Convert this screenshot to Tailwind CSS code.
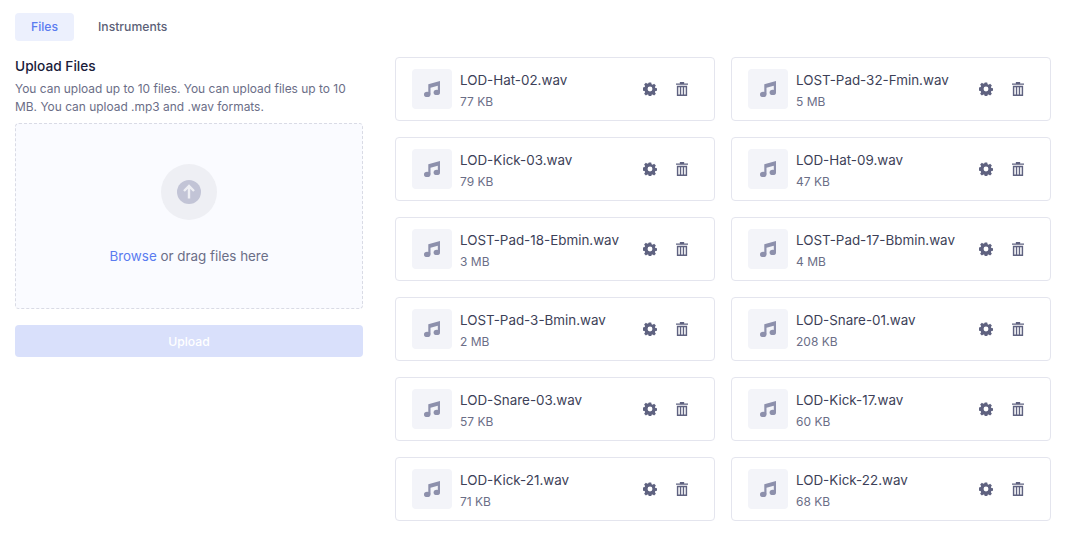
<!DOCTYPE html>
<html lang="en">
<head>
  <meta charset="UTF-8" />
  <meta name="viewport" content="width=device-width, initial-scale=1.0" />
  <title>Upload Files</title>
  <script src="https://cdn.jsdelivr.net/npm/@tailwindcss/browser@4"></script>
</head>
<body class="bg-white h-[539px] overflow-hidden font-['Inter',sans-serif]">

  <!-- Tabs -->
  <div class="flex gap-2 px-[15px] pt-[13px] h-[57px] text-[12.2px] font-medium">
    <button class="h-7 w-[59px] pt-[1px] rounded bg-[#ecf0fd] text-[#5a7cf0]">Files</button>
    <button class="h-7 px-4 pt-[1px] text-[#5c5f77]">Instruments</button>
  </div>

  <div class="flex gap-8 pl-[15px]">
    <!-- Upload -->
    <div class="w-[348px]">
      <h2 class="text-[13.7px] leading-[18px] font-medium text-[#1a1c3a]">Upload Files</h2>
      <p class="mt-[5px] text-[11.95px] leading-[18px] text-[#6b6e87]">You can upload up to 10 files. You can upload files up to 10 MB. You can upload .mp3 and .wav formats.</p>
      <div class="mt-[7px] h-[186px] flex flex-col items-center rounded border border-dashed border-[#d9dbe5] bg-[#fafbff]">
        <div class="mt-10 w-14 h-14 rounded-full bg-[#eeeff4] flex items-center justify-center">
          <svg class="w-6 h-6" viewBox="0 0 24 24">
            <circle cx="12" cy="12" r="12" fill="#c2c4d6" />
            <path d="M12 18.500V6.500M7 11l5-5 5 5" fill="none" stroke="#eeeff4" stroke-width="2.400" />
          </svg>
        </div>
        <p class="mt-[26px] text-[13.4px] leading-5 text-[#6b6e87]"><span class="text-[#5a7cf0]">Browse</span> or drag files here</p>
      </div>
      <button class="mt-4 w-full h-8 pt-[2px] rounded bg-[#d9e0fb] text-[12.2px] font-medium text-white">Upload</button>
    </div>

    <!-- File list -->
    <div id="files" class="grid grid-cols-[320px_320px] gap-4"></div>
  </div>

  <script>
    const files = [
      ['LOD-Hat-02.wav', '77 KB'], ['LOST-Pad-32-Fmin.wav', '5 MB'],
      ['LOD-Kick-03.wav', '79 KB'], ['LOD-Hat-09.wav', '47 KB'],
      ['LOST-Pad-18-Ebmin.wav', '3 MB'], ['LOST-Pad-17-Bbmin.wav', '4 MB'],
      ['LOST-Pad-3-Bmin.wav', '2 MB'], ['LOD-Snare-01.wav', '208 KB'],
      ['LOD-Snare-03.wav', '57 KB'], ['LOD-Kick-17.wav', '60 KB'],
      ['LOD-Kick-21.wav', '71 KB'], ['LOD-Kick-22.wav', '68 KB'],
    ];

    document.getElementById('files').innerHTML = files.map(([name, size]) => `
      <div class="h-16 flex items-center pl-4 rounded border border-[#e4e5ee] bg-white">
        <div class="w-10 h-10 shrink-0 rounded bg-[#f3f4f9] flex items-center justify-center">
          <svg class="w-4 h-4" viewBox="0 0 16 16" fill="#8d90ac">
            <path d="M4.300 3.300 16 0v11.500h-2.200V4.700L6.500 6.800v6.700H4.300z" />
            <ellipse cx="3.200" cy="13.400" rx="3.200" ry="2.600" />
            <ellipse cx="12.800" cy="11.400" rx="3.200" ry="2.600" />
          </svg>
        </div>
        <div class="ml-2 w-[174px] pt-[3px]">
          <div class="text-[13.4px] leading-5 text-[#3d3f58] whitespace-nowrap">${name}</div>
          <div class="mt-[2px] text-xs leading-5 text-[#6b6e87]">${size}</div>
        </div>
        <button class="ml-2 w-4 h-4 flex items-center justify-center">
          <svg class="w-[14px] h-[14px]" viewBox="0 0 16 16" fill="#5f6280">
            <path fill-rule="evenodd" d="M6.600.5h2.800l.4 2 1.200.5 1.700-1.100 2 2-1.100 1.700.5 1.200 2 .4v2.800l-2 .4-.5 1.200 1.100 1.700-2 2-1.700-1.100-1.200.5-.4 2H6.600l-.4-2-1.200-.5-1.700 1.100-2-2 1.100-1.700-.5-1.200-2-.4V6.200l2-.4.5-1.200-1.100-1.700 2-2 1.700 1.100 1.200-.5zM8 5.200a2.800 2.800 0 1 0 0 5.600 2.800 2.800 0 0 0 0-5.600z" />
          </svg>
        </button>
        <button class="ml-4 w-4 h-4 flex items-center justify-center">
          <svg class="w-3 h-[14px]" viewBox="0 0 14 15" preserveAspectRatio="none" fill="#5f6280">
            <path fill-rule="evenodd" d="M4.500 0h5v1.500H14V3H0V1.500h4.500zM1 4h12v11H1zM2.700 5.500v8h1.800v-8zM6.100 5.500v8h1.800v-8zM9.500 5.500v8h1.800v-8z" />
          </svg>
        </button>
      </div>
    `).join('');
  </script>

</body>
</html>
